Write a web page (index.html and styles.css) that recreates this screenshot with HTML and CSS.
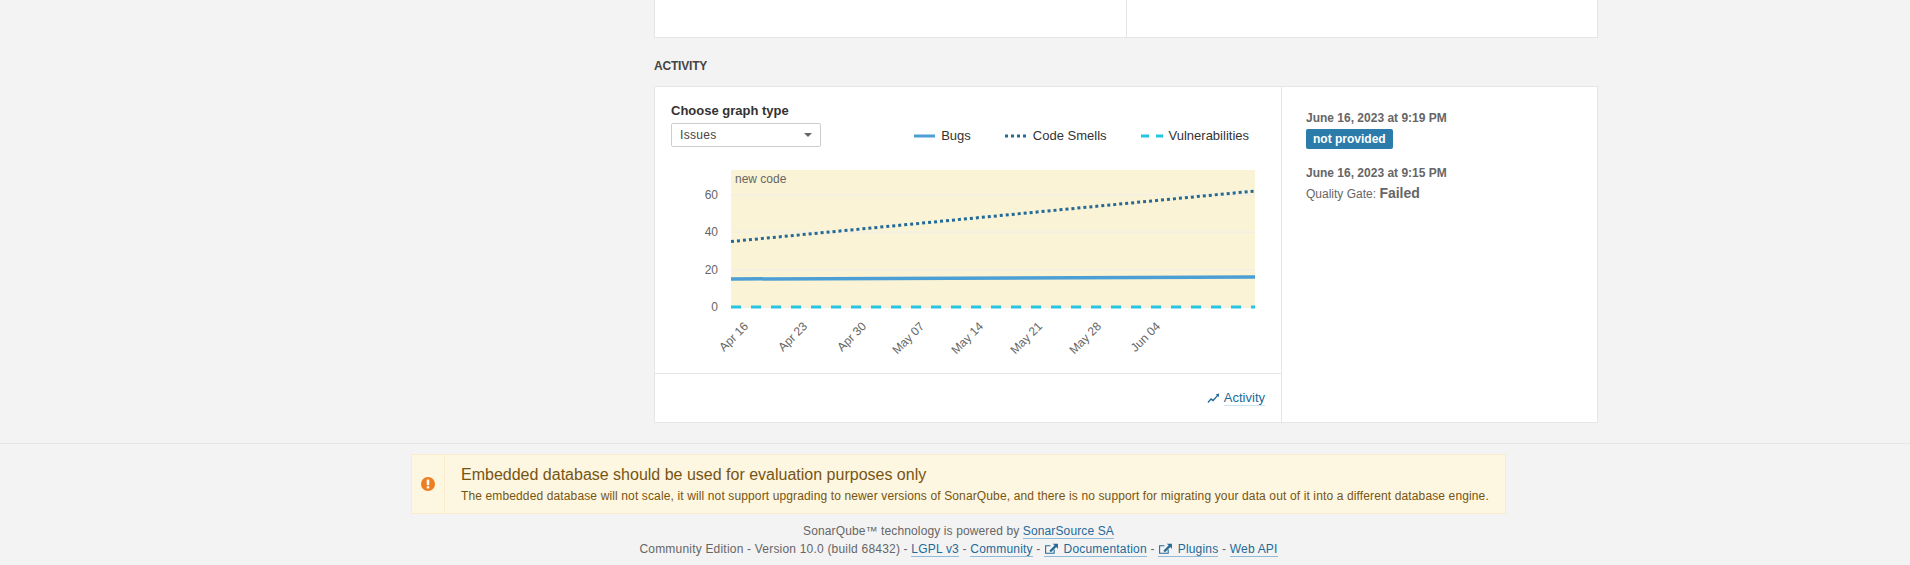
FILE: index.html
```html
<!DOCTYPE html>
<html lang="en">
<head>
<meta charset="utf-8">
<title>SonarQube</title>
<link rel="stylesheet" href="styles.css">
</head>
<body>
<main class="main">
  <div class="top-card">
    <div class="top-cell"></div>
    <div class="top-cell"></div>
  </div>
  <h3 class="section-title">ACTIVITY</h3>
  <section class="activity">
    <div class="graph-col">
      <div class="graph-body">
        <div class="graph-head">
          <div>
            <div class="choose">Choose graph type</div>
            <div class="select">Issues<span class="caret"></span></div>
          </div>
          <ul class="legend">
            <li class="legend-item">
              <svg class="legend-line" width="22" height="4"><line x1="1" y1="2" x2="22" y2="2" class="s-bugs"/></svg>Bugs
            </li>
            <li class="legend-item">
              <svg class="legend-line" width="22" height="4"><line x1="0" y1="2" x2="22" y2="2" class="s-smells"/></svg>Code Smells
            </li>
            <li class="legend-item">
              <svg class="legend-line" width="22" height="4"><line x1="0" y1="2" x2="22" y2="2" class="s-vuln"/></svg>Vulnerabilities
            </li>
          </ul>
        </div>
        <svg class="chart" width="600" height="188" viewBox="0 0 600 188">
          <rect x="60" y="0" width="524" height="138" class="newcode"/>
          <text x="64" y="13" class="nc-label">new code</text>
          <line x1="60" x2="584" y1="25" y2="25" class="grid"/>
          <line x1="60" x2="584" y1="62" y2="62" class="grid"/>
          <line x1="60" x2="584" y1="100" y2="100" class="grid"/>
          <line x1="60" x2="584" y1="137" y2="137" class="grid"/>
          <text x="47" y="29" class="y-tick">60</text>
          <text x="47" y="66" class="y-tick">40</text>
          <text x="47" y="104" class="y-tick">20</text>
          <text x="47" y="141" class="y-tick">0</text>
          <line x1="60" y1="109" x2="584" y2="107" class="c-bugs"/>
          <line x1="60" y1="71.5" x2="584" y2="21" class="c-smells"/>
          <line x1="60" y1="137" x2="584" y2="137" class="c-vuln"/>
          <text class="x-tick" transform="translate(78 157) rotate(-45)">Apr 16</text>
          <text class="x-tick" transform="translate(137 157) rotate(-45)">Apr 23</text>
          <text class="x-tick" transform="translate(196 157) rotate(-45)">Apr 30</text>
          <text class="x-tick" transform="translate(254 157) rotate(-45)">May 07</text>
          <text class="x-tick" transform="translate(313 157) rotate(-45)">May 14</text>
          <text class="x-tick" transform="translate(372 157) rotate(-45)">May 21</text>
          <text class="x-tick" transform="translate(431 157) rotate(-45)">May 28</text>
          <text class="x-tick" transform="translate(490 157) rotate(-45)">Jun 04</text>
        </svg>
      </div>
      <div class="graph-foot">
        <svg class="trend" width="12" height="12" viewBox="0 0 12 12"><path d="M0.5 10 L4 6 L6 7.5 L9.8 3.5 L8.6 2.4 L12 1.5 L11.8 5.2 L10.7 4.2 L6.2 9.6 L4 8 L1.5 11 Z"/></svg>
        <a class="link" href="#">Activity</a>
      </div>
    </div>
    <aside class="events">
      <div class="event">
        <div class="event-date">June 16, 2023 at 9:19 PM</div>
        <span class="badge">not provided</span>
      </div>
      <div class="event">
        <div class="event-date">June 16, 2023 at 9:15 PM</div>
        <div class="event-gate">Quality Gate: <strong class="gate-val">Failed</strong></div>
      </div>
    </aside>
  </section>
</main>
<footer class="footer">
  <div class="footer-inner">
    <div class="alert">
      <div class="alert-icon">
        <svg width="14" height="14" viewBox="0 0 14 14"><circle cx="7" cy="7" r="7" class="alert-circle"/><rect x="5.7" y="2.6" width="2.6" height="5.6" rx="0.4" class="alert-mark"/><rect x="5.7" y="9.2" width="2.6" height="2.4" rx="0.4" class="alert-mark"/></svg>
      </div>
      <div class="alert-body">
        <h2 class="alert-title">Embedded database should be used for evaluation purposes only</h2>
        <p class="alert-text">The embedded database will not scale, it will not support upgrading to newer versions of SonarQube, and there is no support for migrating your data out of it into a different database engine.</p>
      </div>
    </div>
    <div class="foot-line foot-first">SonarQube™ technology is powered by <a class="flink" href="#">SonarSource SA</a></div>
    <div class="foot-line foot-second">Community Edition - Version 10.0 (build 68432) - <a class="flink" href="#">LGPL v3</a> - <a class="flink" href="#">Community</a> - <a class="flink" href="#"><svg class="ext" width="14" height="14" viewBox="0 0 14 14"><path d="M9.5 8v3.5H1.5V4.5H6" class="ext-box"/><path d="M5 9 L10 4 L8 2.5 H13 V7.5 L11.5 5.5 L6.5 10.5 Z" class="ext-arrow"/></svg> Documentation</a> - <a class="flink" href="#"><svg class="ext" width="14" height="14" viewBox="0 0 14 14"><path d="M9.5 8v3.5H1.5V4.5H6" class="ext-box"/><path d="M5 9 L10 4 L8 2.5 H13 V7.5 L11.5 5.5 L6.5 10.5 Z" class="ext-arrow"/></svg> Plugins</a> - <a class="flink" href="#">Web API</a></div>
  </div>
</footer>
</body>
</html>
```
FILE: styles.css
```css
* { box-sizing: border-box; }
html, body { margin: 0; padding: 0; }
body {
  height: 565px;
  overflow: hidden;
  background: #f3f3f3;
  color: #333;
  font: 12px/16px "Liberation Sans", Arial, sans-serif;
}
.main { width: 944px; margin-left: 654px; }

.top-card {
  display: flex;
  height: 38px;
  background: #fff;
  border: 1px solid #e6e6e6;
  border-top: 0;
}
.top-cell { flex: 0 0 471px; }
.top-cell + .top-cell { flex: 1; border-left: 1px solid #e6e6e6; }

.section-title {
  margin: 20px 0 12px;
  font-size: 12px;
  line-height: 16px;
  font-weight: 700;
  letter-spacing: -0.2px;
  color: #444;
}

.activity {
  display: flex;
  height: 337px;
  background: #fff;
  border: 1px solid #e6e6e6;
}
.graph-col {
  flex: 0 0 627px;
  display: flex;
  flex-direction: column;
  border-right: 1px solid #e6e6e6;
}
.graph-body { flex: 1; padding: 16px 0 0 16px; }
.graph-head { display: flex; justify-content: space-between; padding-right: 32px; height: 67px; }
.choose { font-size: 13px; font-weight: 700; line-height: 16px; margin-bottom: 4px; color: #333; }
.select {
  position: relative;
  width: 150px;
  height: 24px;
  padding: 0 8px;
  border: 1px solid #cdcdcd;
  border-radius: 2px;
  font-size: 12px;
  letter-spacing: 0.3px;
  line-height: 22px;
  color: #444;
}
.caret {
  position: absolute;
  right: 8px;
  top: 9px;
  border: 4px solid transparent;
  border-top: 4px solid #666;
  border-bottom: 0;
}
.legend {
  list-style: none;
  display: flex;
  gap: 34px;
  margin: 0;
  padding: 25px 0 0;
}
.legend-item { display: flex; align-items: center; gap: 6px; height: 16px; font-size: 13px; color: #333; }
.legend-line { display: block; }
.s-bugs { stroke: #4b9fd5; stroke-width: 3; }
.s-smells { stroke: #236a97; stroke-width: 3; stroke-dasharray: 3 3; }
.s-vuln { stroke: #24c6e0; stroke-width: 3; stroke-dasharray: 8 7; }

.chart { display: block; }
.newcode { fill: #fbf3d5; }
.grid { stroke: #eeeeee; stroke-width: 1; }
.nc-label { font-size: 12px; fill: #666; }
.y-tick { font-size: 12px; fill: #666; text-anchor: end; }
.x-tick { font-size: 12px; fill: #666; text-anchor: end; }
.c-bugs { stroke: #4b9fd5; stroke-width: 3.5; }
.c-smells { stroke: #236a97; stroke-width: 3; stroke-dasharray: 3 3; }
.c-vuln { stroke: #24c6e0; stroke-width: 3; stroke-dasharray: 10 10; }

.graph-foot {
  display: flex;
  justify-content: flex-end;
  align-items: center;
  gap: 5px;
  height: 49px;
  padding-right: 16px;
  border-top: 1px solid #e6e6e6;
}
.trend { fill: #236a97; display: block; }
.link { color: #236a97; font-size: 13px; text-decoration: none; border-bottom: 1px solid #cae3f2; line-height: 15px; }

.events { flex: 1; padding: 23px 24px 0; }
.event { margin-bottom: 16px; }
.event-date { font-weight: 700; color: #666; line-height: 16px; }
.badge {
  display: inline-block;
  height: 20px;
  margin-top: 3px;
  padding: 0 7px;
  background: #2b7bab;
  border-radius: 2px;
  color: #fff;
  font-weight: 700;
  line-height: 20px;
}
.event-gate { margin-top: 2px; color: #666; line-height: 20px; }
.gate-val { font-size: 14px; }

.footer {
  margin-top: 20px;
  height: 122px;
  border-top: 1px solid #e6e6e6;
  padding-top: 10px;
}
.footer-inner { width: 1095px; margin-left: 411px; text-align: center; color: #666; letter-spacing: 0.12px; }
.alert {
  display: flex;
  height: 60px;
  text-align: left;
  background: #fdf6e1;
  border: 1px solid #faebcc;
  border-radius: 2px;
  color: #775511;
}
.alert-icon {
  flex: 0 0 33px;
  display: flex;
  align-items: center;
  justify-content: center;
  border-right: 1px solid #faebcc;
}
.alert-circle { fill: #ed7d20; }
.alert-mark { fill: #fff; }
.alert-body { padding: 9px 16px; }
.alert-title { margin: 0; font-size: 16px; font-weight: 400; line-height: 22px; letter-spacing: 0; }
.alert-text { margin: 2px 0 0; font-size: 12px; line-height: 16px; letter-spacing: 0.13px; }
.foot-line { line-height: 18px; }
.foot-first { margin-top: 8px; }
.foot-second { letter-spacing: 0.2px; }
.flink { color: #236a97; text-decoration: none; border-bottom: 1px solid #8fbbd8; }
.ext { vertical-align: -3px; margin-right: 1px; width: 15px; height: 15px; }
.ext-box { fill: none; stroke: #236a97; stroke-width: 1; }
.ext-arrow { fill: #236a97; }
```
